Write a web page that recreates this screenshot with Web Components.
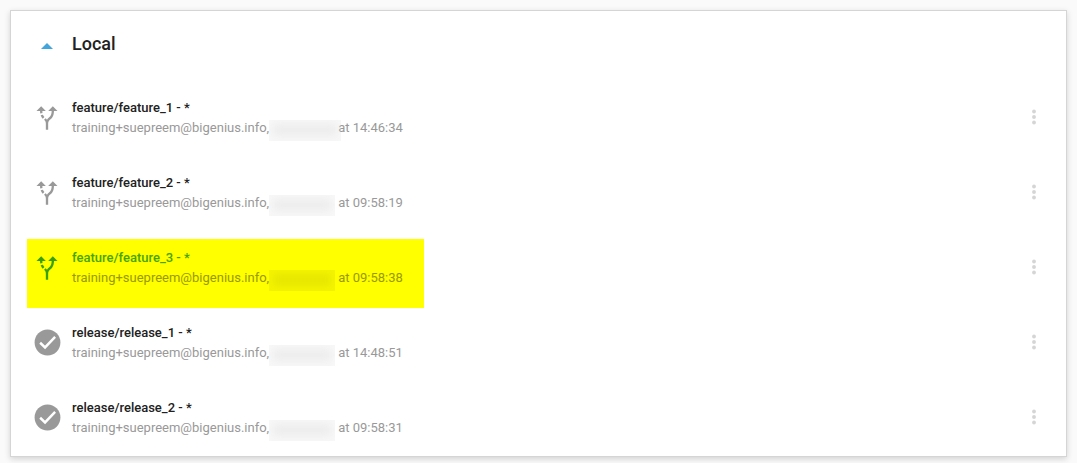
<!DOCTYPE html>
<html lang="en">
<head>
<meta charset="utf-8">
<title>Branches</title>
<style>
body { margin: 0; padding: 10px; background: #fafafa; font-family: Roboto, "Liberation Sans", sans-serif; color: #212121; }
</style>
</head>
<body>
<branch-group heading="Local">
  <branch-item kind="feature" name="feature/feature_1 - *" author="training+suepreem@bigenius.info," time="at 14:46:34" wide></branch-item>
  <branch-item kind="feature" name="feature/feature_2 - *" author="training+suepreem@bigenius.info," time="at 09:58:19"></branch-item>
  <branch-item kind="feature" name="feature/feature_3 - *" author="training+suepreem@bigenius.info," time="at 09:58:38" active></branch-item>
  <branch-item kind="release" name="release/release_1 - *" author="training+suepreem@bigenius.info," time="at 14:48:51"></branch-item>
  <branch-item kind="release" name="release/release_2 - *" author="training+suepreem@bigenius.info," time="at 09:58:31"></branch-item>
</branch-group>

<template id="group-template">
<style>
:host { display: block; padding-bottom: 1px; background: #fff; border: 1px solid #d5d5d5; box-shadow: 0 2px 6px rgba(0,0,0,.16); }
header { display: flex; align-items: center; height: 66px; margin-bottom: 3px; }
button { display: flex; align-items: center; justify-content: center; width: 28px; height: 28px; margin: 0 11px 0 22px; padding: 4px 0 0; border: 0; background: none; cursor: pointer; }
h2 { margin: 0; font-size: 18px; line-height: 24px; font-weight: 500; }
svg { display: block; }
</style>
<header>
  <button type="button" aria-label="Collapse" aria-expanded="true"><svg width="12" height="6" viewBox="0 0 12 6"><path d="M0 6 6 0l6 6z" fill="#42a5dc"/></svg></button>
  <h2></h2>
</header>
<div role="list"><slot></slot></div>
</template>

<template id="item-template">
<style>
:host { display: flex; align-items: center; position: relative; height: 75px; --icon: #999; --name: #212121; --meta: #999; --mask: #ececec; --mask-edge: #f8f8f8; }
:host([active]) { --icon: #38a100; --name: #46a500; --meta: #999900; --mask: #e6e600; --mask-edge: #f4f400; }
.mark { display: none; position: absolute; left: 16px; top: 9px; width: 397px; height: 69px; background: #ff0; }
:host([active]) .mark { display: block; }
branch-icon { width: 50px; margin: 0 0 0 11px; color: var(--icon); position: relative; }
.text { position: relative; flex: 1; font-size: 13px; line-height: 20px; }
.name { color: var(--name); font-weight: 500; }
.meta { display: flex; height: 20px; color: var(--meta); white-space: nowrap; }
.date { width: 66px; height: 21px; margin: 2px 3px 0 0; background: var(--mask-edge); overflow: hidden; }
.date::before { content: ""; display: block; height: 12px; margin: 4px; background: var(--mask); filter: blur(4px); }
:host([wide]) .date { width: 72px; margin-right: -3px; }
button { display: flex; align-items: center; justify-content: center; width: 24px; height: 24px; margin: 0 20px 0 0; padding: 0 0 1px; border: 0; background: none; color: #d5d5d5; cursor: pointer; }
</style>
<div class="mark"></div>
<branch-icon></branch-icon>
<div class="text">
  <div class="name"></div>
  <div class="meta"><span class="author"></span><span class="date" aria-hidden="true"></span><span class="time"></span></div>
</div>
<button type="button" aria-label="More actions"><svg width="22" height="22" viewBox="0 0 24 24" fill="currentColor"><circle cx="12" cy="6" r="2.1"/><circle cx="12" cy="12" r="2.1"/><circle cx="12" cy="18" r="2.1"/></svg></button>
</template>

<script>
const stamp = (el, id, fill) => {
  const content = document.getElementById(id).content.cloneNode(true);
  fill(content);
  el.attachShadow({ mode: "open" }).append(content);
};

const ICONS = {
  feature: [28, '<path d="M9.78,11.16l-1.42,1.42c-0.68-0.69-1.34-1.58-1.79-2.94l1.94-0.49C8.83,10.04,9.28,10.65,9.78,11.16z M11,6L7,2L3,6h3.02C6.04,6.81,6.1,7.54,6.21,8.17l1.94-0.49C8.08,7.2,8.03,6.63,8.02,6H11z M21,6l-4-4l-4,4h2.99c-0.1,3.68-1.28,4.75-2.54,5.88c-0.5,0.44-1.01,0.92-1.45,1.55c-0.34-0.49-0.73-0.88-1.13-1.24L9.46,13.6C10.39,14.45,11,15.14,11,17v5h2v-5c0-2.02,0.71-2.66,1.79-3.63c1.38-1.24,3.08-2.78,3.2-7.37H21z"/>'],
  release: [31, '<circle cx="12" cy="12" r="10"/><path d="M6.3 12.2 10.1 15.8 17.9 7.7" fill="none" stroke="#fff" stroke-width="1.9"/>']
};

customElements.define("branch-icon", class extends HTMLElement {
  connectedCallback() {
    const [size, shapes] = ICONS[this.getAttribute("kind")];
    this.attachShadow({ mode: "open" }).innerHTML =
      `<style>:host { display: flex; justify-content: center; align-items: center; } svg { flex: none; }</style>
       <svg width="${size}" height="${size}" viewBox="0 0 24 24" fill="currentColor" aria-hidden="true">${shapes}</svg>`;
  }
});

customElements.define("branch-item", class extends HTMLElement {
  connectedCallback() {
    this.setAttribute("role", "listitem");
    stamp(this, "item-template", content => {
      content.querySelector("branch-icon").setAttribute("kind", this.getAttribute("kind"));
      for (const key of ["name", "author", "time"])
        content.querySelector("." + key).textContent = this.getAttribute(key);
    });
  }
});

customElements.define("branch-group", class extends HTMLElement {
  connectedCallback() {
    stamp(this, "group-template", content => {
      content.querySelector("h2").textContent = this.getAttribute("heading");
    });
  }
});
</script>
</body>
</html>
